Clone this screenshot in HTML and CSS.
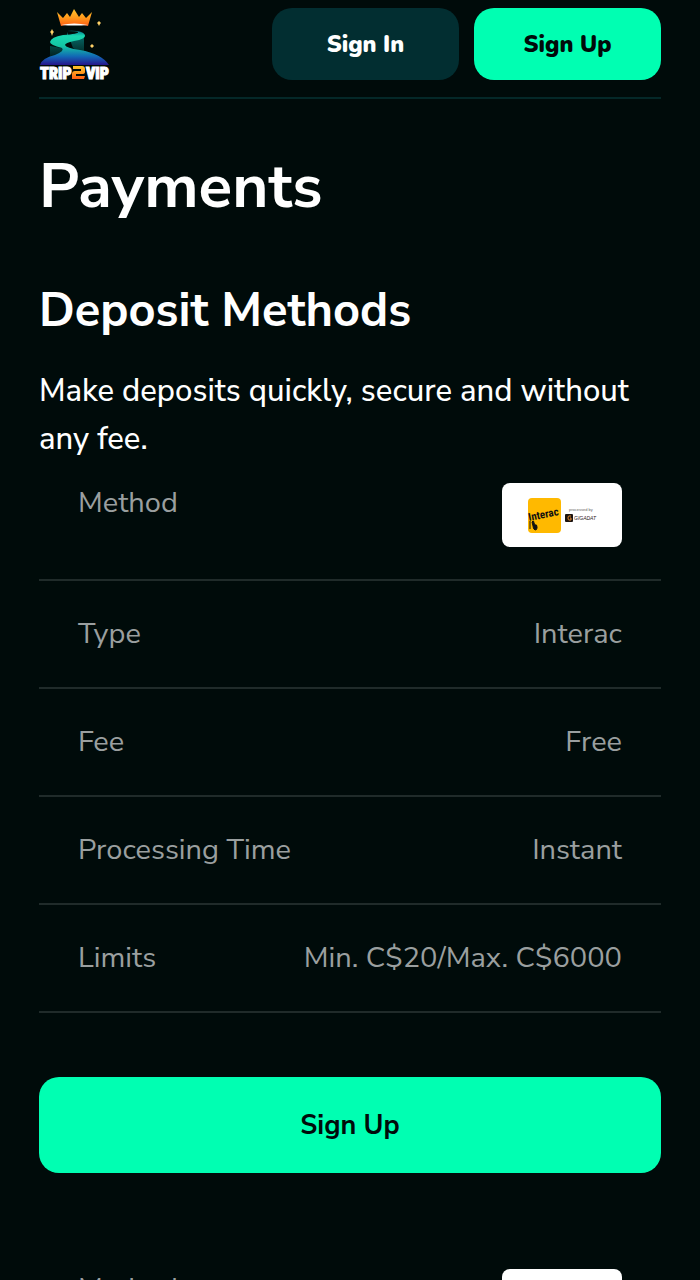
FILE: index.html
```html
<!DOCTYPE html>
<html lang="en">
<head>
    <meta charset="UTF-8">
    <meta name="viewport" content="width=device-width, initial-scale=1.0">
    <title>Payments</title>
    <link rel="stylesheet" href="styles.css">
</head>
<body>
    <svg class="sprite" aria-hidden="true">
        <symbol id="interac" viewBox="0 0 120 64">
            <rect x="26" y="15" width="33" height="35" rx="4" fill="#ffb900"/>
            <text class="interac-name" transform="translate(27 38) rotate(-11)">Interac</text>
            <path d="M28 38v8M30 39l1-1q1 0 1 2l1 2q2-1 2 2v1q0 2-2 2-2-1-2-4z" fill="#111" stroke="#111" stroke-width="1"/>
            <text class="interac-small" x="67" y="28">processed by</text>
            <rect x="63" y="31" width="8" height="8" rx="1" fill="#1b1310"/>
            <path d="M69 33h-2q-1 0-1 2t1 2h2v-2h-1" fill="none" stroke="#e5882c"/>
            <text class="gigadat" x="72" y="37">GIGADAT</text>
        </symbol>
    </svg>
    <div class="container">
        <header class="header">
            <a class="logo" href="#" aria-label="TRIP2VIP">
                <svg width="72" height="72" viewBox="0 0 72 72">
                    <defs>
                        <linearGradient id="crown" x2="0" y2="1">
                            <stop offset="0" stop-color="#ffc42e"/>
                            <stop offset=".5" stop-color="#ff9a1c"/>
                            <stop offset="1" stop-color="#ff5d13"/>
                        </linearGradient>
                        <linearGradient id="road" x2="0" y2="1">
                            <stop offset="0" stop-color="#067a90"/>
                            <stop offset=".15" stop-color="#18d6af"/>
                            <stop offset=".45" stop-color="#14c4a4"/>
                            <stop offset=".75" stop-color="#1267b5"/>
                            <stop offset="1" stop-color="#26158b"/>
                        </linearGradient>
                        <linearGradient id="shade" x2="0" y2="1">
                            <stop offset="0" stop-color="#087573"/>
                            <stop offset="1" stop-color="#001614"/>
                        </linearGradient>
                    </defs>
                    <path d="M18 4l6 6 4-5 3 4 4-8 5 8 3-4 4 5 6-6-4 14q-14-4-27 0z" fill="url(#crown)"/>
                    <path d="M22 17q13-3 27 0-13 1-27 0z" fill="#fff"/>
                    <path d="M28 24v4l17 0v20l-11-8zM11 38v14l9-2 8-9z" fill="url(#shade)"/>
                    <path d="M28 23q15-1 18 4 1 4-11 6-9 2-9 4 1 3 15 5 22 4 29 15H1q2-7 15-10 10-4 7-7-12-3-12-6 1-5 13-7 16-1 15-3-2-1-11-1z" fill="url(#road)"/>
                    <path d="M13 21l1 2 1 1-1 1-1 3-1-3-1-1 1-1zM60 13l1 1 1 1-1 1-1 2-1-2-1-1 1-1zM53 36l1 1 1 1-1 1-1 1-1-1-1-1 1-1z" fill="#ffd268"/>
                    <text class="logo-text" x="1" y="71">TRIP</text>
                    <path d="M34 58h9q3 0 3 3v3q0 2-3 2h-6v2h9l-1 3H33v-5q0-3 3-3h6v-2h-8z" fill="url(#crown)"/>
                    <text class="logo-text" x="47" y="71">VIP</text>
                </svg>
            </a>
            <div class="header-buttons">
                <button class="btn btn-dark" type="button">Sign In</button>
                <button class="btn btn-green" type="button">Sign Up</button>
            </div>
        </header>
        <main>
            <h1>Payments</h1>
            <h2>Deposit Methods</h2>
            <p class="intro">Make deposits quickly, secure and without any fee.</p>
            <table class="methods">
                <tr class="method-row">
                    <th scope="row">Method</th>
                    <td>
                        <svg class="method-card" role="img" aria-label="Interac"><use href="#interac"/></svg>
                    </td>
                </tr>
                <tr>
                    <th scope="row">Type</th>
                    <td>Interac</td>
                </tr>
                <tr>
                    <th scope="row">Fee</th>
                    <td>Free</td>
                </tr>
                <tr>
                    <th scope="row">Processing Time</th>
                    <td>Instant</td>
                </tr>
                <tr>
                    <th scope="row">Limits</th>
                    <td>Min. C$20/Max. C$6000</td>
                </tr>
            </table>
            <button class="btn btn-green btn-wide" type="button">Sign Up</button>
            <table class="methods">
                <tr class="method-row">
                    <th scope="row">Method</th>
                    <td>
                        <svg class="method-card" role="img" aria-label="Interac"><use href="#interac"/></svg>
                    </td>
                </tr>
            </table>
        </main>
    </div>
</body>
</html>
```
FILE: styles.css
```css
* {
    box-sizing: border-box;
}

body {
    margin: 0;
    background-color: #000b0a;
    color: #fff;
    font-family: "Nunito Sans", Nunito, Lato, sans-serif;
}

.sprite {
    display: none;
}

.container {
    padding: 0 39px;
}

.header {
    display: flex;
    justify-content: space-between;
    align-items: center;
    padding: 8px 0 17px;
    border-bottom: 2px solid #042828;
}

.logo svg {
    display: block;
}

.logo-text {
    font-family: "Liberation Sans Narrow", "Roboto Condensed", Roboto, sans-serif;
    font-size: 16px;
    font-weight: 900;
    fill: #fff;
    stroke: #fff;
    stroke-width: 1px;
}

.header-buttons {
    display: flex;
    gap: 15px;
}

.btn {
    width: 187px;
    height: 72px;
    border: none;
    border-radius: 20px;
    font-family: Nunito, Lato, sans-serif;
    font-size: 23px;
    font-weight: 900;
    cursor: pointer;
}

.btn-dark {
    background-color: #022e31;
    color: #fff;
}

.btn-green {
    background-color: #00ffb2;
    color: #000b0a;
}

.btn-wide {
    display: block;
    width: 100%;
    height: 96px;
    margin: 64px 0 88px;
    font-family: "Nunito Sans", Nunito, Lato, sans-serif;
    font-size: 27px;
    font-weight: 700;
}

h1 {
    margin: 48px 0 56px;
    font-size: 62px;
    line-height: 80px;
}

h2 {
    margin: 0 0 28px;
    font-size: 47px;
    line-height: 56px;
}

.intro {
    margin: 0 0 12px;
    font-size: 31px;
    font-weight: 500;
    line-height: 48px;
}

.methods {
    width: 100%;
    border-collapse: collapse;
    color: #9a9f9f;
    font-size: 29px;
    line-height: 40px;
}

.methods tr {
    display: flex;
    justify-content: space-between;
    border-bottom: 2px solid #202b2a;
}

.methods th,
.methods td {
    padding: 33px 39px;
    font-weight: 400;
}

.methods th {
    padding-right: 0;
    text-align: left;
}

.methods td {
    padding-left: 0;
    text-align: right;
}

.methods .method-row th,
.methods .method-row td {
    padding-top: 8px;
    padding-bottom: 32px;
}

.method-card {
    display: block;
    width: 120px;
    height: 64px;
    border-radius: 8px;
    background-color: #fff;
}

.interac-name {
    font-family: "Liberation Sans Narrow", "Roboto Condensed", Roboto, sans-serif;
    font-size: 11px;
    font-weight: 700;
    fill: #111;
}

.interac-small {
    font-family: "Liberation Sans", sans-serif;
    font-size: 4px;
    fill: #666;
}

.gigadat {
    font-family: "Liberation Sans", sans-serif;
    font-size: 5px;
    font-style: italic;
    fill: #30201c;
}
```
